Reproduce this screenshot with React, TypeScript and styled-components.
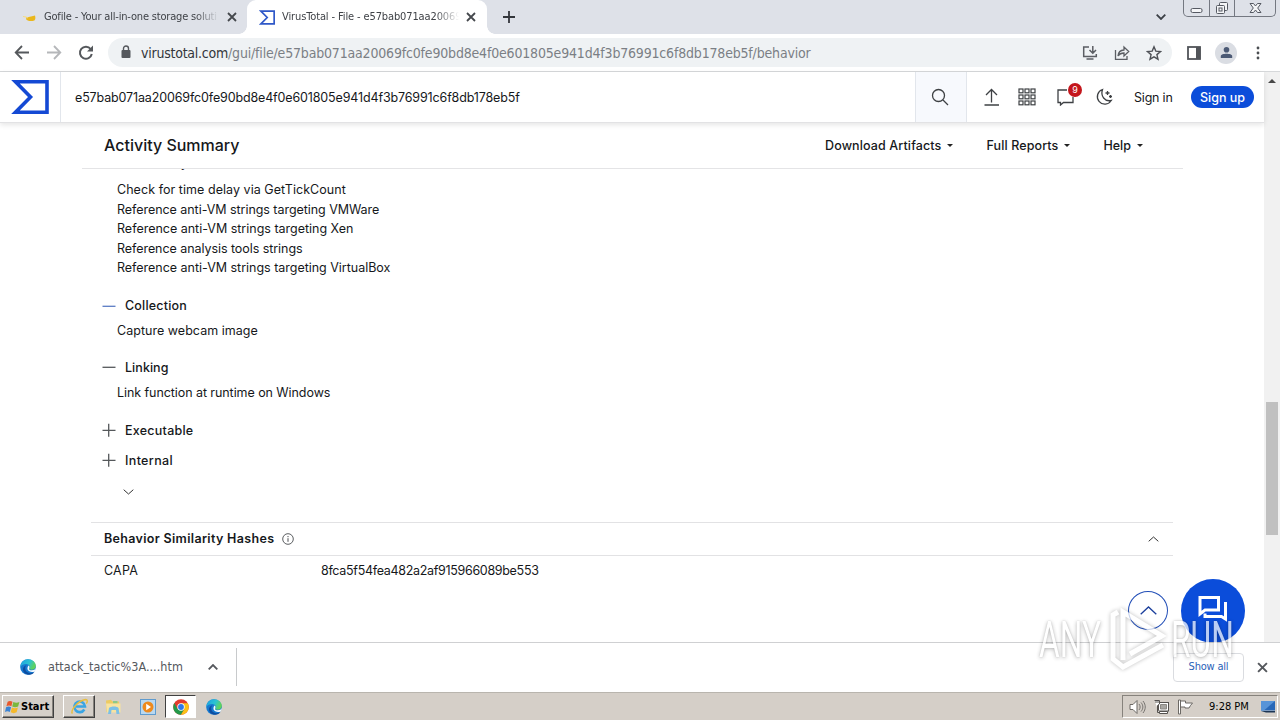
import React from "react";
import styled, { createGlobalStyle, css } from "styled-components";

const uiFont = `"DejaVu Sans Condensed", "DejaVu Sans", "Liberation Sans", sans-serif`;
const pageFont = `Inter, "Liberation Sans", sans-serif`;

const Global = createGlobalStyle`
  * { box-sizing: border-box; }
  html, body { margin: 0; padding: 0; background: #fff; overflow: hidden; }
  svg { display: block; flex: none; }
`;

const Desktop = styled.div`
  position: relative;
  width: 1280px;
  height: 720px;
  display: flex;
  flex-direction: column;
  overflow: hidden;
  font-family: ${uiFont};
  background: #fff;
`;

const Label = styled.span<{ $size?: number; $ls?: number; $color?: string; $weight?: number; $page?: boolean }>`
  white-space: nowrap;
  font-family: ${(p) => (p.$page ? pageFont : uiFont)};
  font-size: ${(p) => p.$size ?? 12}px;
  letter-spacing: ${(p) => p.$ls ?? 0}px;
  color: ${(p) => p.$color ?? "#16181b"};
  font-weight: ${(p) => p.$weight ?? 400};
`;

/* ---------- browser chrome ---------- */

const TabStrip = styled.div`
  display: flex;
  height: 34px;
  background: #dee1e8;
`;

const Tab = styled.div<{ $active?: boolean; $width: number; $pad: number; $gap: number }>`
  display: flex;
  align-items: center;
  width: ${(p) => p.$width}px;
  height: 34px;
  padding-left: ${(p) => p.$pad}px;
  gap: ${(p) => p.$gap}px;
  ${(p) =>
    p.$active &&
    css`
      background: #fff;
      border-radius: 9px 9px 0 0;
    `}
`;

const TabTitle = styled(Label)<{ $w: number }>`
  width: ${(p) => p.$w}px;
  line-height: 16px;
  mask-image: linear-gradient(90deg, #000 calc(100% - 24px), transparent);
`;

const TabFoot = styled.div<{ $left?: boolean }>`
  width: 8px;
  height: 8px;
  margin-top: 26px;
  margin-left: ${(p) => (p.$left ? -8 : 0)}px;
  background: radial-gradient(circle at ${(p) => (p.$left ? "0 0" : "100% 0")}, #dee1e8 7.5px, #fff 8px);
`;

const NewTab = styled.div`
  padding: 11px 0 0 8px;
`;

const TabSearch = styled.div`
  margin-left: auto;
  padding: 14px 17px 0 0;
`;

const WindowButtons = styled.div`
  display: flex;
  width: 93px;
  height: 17px;
  margin-right: 4px;
  border: 1px solid #747881;
  border-top: 0;
  border-radius: 0 0 5px 5px;
`;

const WindowButton = styled.div<{ $w: number }>`
  width: ${(p) => p.$w}px;
  display: flex;
  justify-content: center;
  & + & {
    border-left: 1px solid #747881;
  }
`;

const Toolbar = styled.div`
  display: flex;
  align-items: center;
  height: 38px;
  border-bottom: 1px solid #d6d8da;
`;

const NavButtons = styled.div`
  display: flex;
  gap: 16px;
  padding: 0 14px;
`;

const Omnibox = styled.div`
  display: flex;
  align-items: center;
  width: 1064px;
  height: 29px;
  padding: 0 10px 0 12px;
  border-radius: 15px;
  background: #eff2f4;
`;

const Url = styled.div`
  display: flex;
  margin-left: 9px;
`;

const OmniboxActions = styled.div`
  display: flex;
  gap: 16px;
  margin-left: auto;
`;

const ToolbarActions = styled.div`
  display: flex;
  align-items: center;
  padding-left: 14px;
  gap: 13px;
`;

const Avatar = styled.div`
  display: flex;
  align-items: center;
  justify-content: center;
  width: 22px;
  height: 22px;
  border-radius: 50%;
  background: #dadde3;
`;

/* ---------- page ---------- */

const Viewport = styled.div`
  display: flex;
  height: 570px;
`;

const Page = styled.div`
  position: relative;
  width: 1264px;
  display: flex;
  flex-direction: column;
`;

const SiteHeader = styled.header`
  position: relative;
  z-index: 2;
  display: flex;
  height: 51px;
  background: #fff;
  border-bottom: 1px solid #e2e2e4;
  box-shadow: 0 2px 5px rgba(0, 0, 0, 0.1);
`;

const LogoBox = styled.div`
  width: 61px;
  padding: 8px 0 0 11px;
  border-right: 1px solid #e2e6ec;
`;

const SearchText = styled.div`
  display: flex;
  align-items: center;
  flex: 1;
  padding-left: 14px;
`;

const SearchButton = styled.div`
  display: flex;
  align-items: center;
  justify-content: center;
  width: 52px;
  padding-right: 2px;
  background: #f7f9fd;
  border: 1px solid #e2e6ec;
  border-width: 0 1px;
`;

const HeaderActions = styled.div`
  display: flex;
  align-items: center;
  width: 297px;
  padding-left: 16px;
`;

const IconSlot = styled.div<{ $w: number }>`
  position: relative;
  width: ${(p) => p.$w}px;
`;

const Badge = styled.div`
  position: absolute;
  left: 12px;
  top: -5px;
  width: 14px;
  height: 14px;
  border-radius: 50%;
  background: #c4161c;
  color: #fff;
  font: 9px/14px ${pageFont};
  text-align: center;
`;

const SignUp = styled.div`
  display: flex;
  align-items: center;
  justify-content: center;
  width: 63px;
  height: 22px;
  margin-left: auto;
  margin-right: 10px;
  border-radius: 11px;
  background: #0b4dda;
`;

const SummaryBar = styled.div`
  position: relative;
  z-index: 1;
  display: flex;
  align-items: center;
  flex: none;
  width: 1101px;
  height: 46px;
  margin-left: 82px;
  padding: 0 40px 1px 22px;
  background: #fff;
  border-bottom: 1px solid #e4e4e6;
`;

const Menus = styled.div`
  display: flex;
  gap: 33px;
  margin-left: auto;
`;

const Menu = styled.div`
  display: flex;
  align-items: center;
  gap: 6px;
`;

const Caret = styled.i`
  border: 3px solid transparent;
  border-top: 3px solid #222;
  border-bottom: 0;
`;

const Behaviors = styled.div`
  display: flex;
  flex-direction: column;
  flex: none;
  height: 370px;
  margin-left: 102px;
  margin-top: -17px;
`;

const Rule = styled.div`
  height: 19.5px;
  line-height: 19.5px;
  padding-left: 15px;
  display: flex;
`;

const GroupHead = styled.div<{ $top: number }>`
  display: flex;
  align-items: center;
  gap: 9px;
  height: 20px;
  margin-top: ${(p) => p.$top}px;
`;

const GroupRules = styled.div<{ $top?: number }>`
  padding-top: ${(p) => p.$top ?? 5}px;
`;

const More = styled.div`
  padding: 19px 0 0 21px;
`;

const HashSection = styled.section`
  width: 1082px;
  margin-left: 91px;
  border-top: 1px solid #e2e2e4;
`;

const HashHead = styled.div`
  display: flex;
  align-items: center;
  gap: 8px;
  height: 33px;
  padding: 0 14px 1px 13px;
  border-bottom: 1px solid #e2e2e4;
  & > :last-child {
    margin-left: auto;
  }
`;

const HashRow = styled.div`
  display: grid;
  grid-template-columns: 217px auto;
  align-items: center;
  height: 28px;
  padding-left: 13px;
`;

const BackToTop = styled.div`
  position: absolute;
  left: 1128px;
  top: 519px;
  width: 40px;
  height: 39px;
  display: flex;
  align-items: center;
  justify-content: center;
  border: 1px solid #2450b8;
  border-radius: 50%;
  background: #fff;
`;

const ChatButton = styled.div`
  position: absolute;
  left: 1181px;
  top: 507px;
  width: 64px;
  height: 64px;
  display: flex;
  justify-content: center;
  padding-top: 15px;
  border-radius: 50%;
  background: #0b4dda;
`;

const Scrollbar = styled.div`
  width: 16px;
  background: #f1f1f1;
  padding: 7px 2px 0;
`;

const ScrollUp = styled.div`
  margin: 0 auto;
  width: 0;
  border: 4px solid transparent;
  border-top: 0;
  border-bottom: 4px solid #484848;
`;

const Thumb = styled.div`
  width: 12px;
  height: 133px;
  margin-top: 319px;
  background: #c0c0c0;
`;

/* ---------- downloads and taskbar ---------- */

const Downloads = styled.div`
  position: relative;
  display: flex;
  align-items: center;
  height: 50px;
  padding-bottom: 1px;
  background: #fff;
  border-top: 1px solid #cfd0d2;
`;

const DownloadItem = styled.div`
  display: flex;
  align-items: center;
  justify-content: space-between;
  width: 237px;
  height: 38px;
  padding: 0 18px 0 20px;
  border-right: 1px solid #c8cacc;
`;

const DownloadFile = styled.div`
  display: flex;
  align-items: center;
  gap: 12px;
  ${Label} {
    padding-bottom: 2px;
  }
`;

const DownloadActions = styled.div`
  display: flex;
  align-items: center;
  gap: 13px;
  margin-left: auto;
  padding-right: 12px;
`;

const ShowAll = styled.div`
  display: flex;
  align-items: center;
  justify-content: center;
  width: 71px;
  height: 29px;
  padding-bottom: 2px;
  border: 1px solid #dadce0;
  border-radius: 4px;
`;

const Taskbar = styled.div`
  display: flex;
  align-items: center;
  height: 28px;
  border-top: 1px solid #b9b5ae;
  background: #d5cfc8;
`;

const StartButton = styled.div`
  display: flex;
  align-items: center;
  width: 52px;
  height: 23px;
  margin-left: 2px;
  padding-left: 2px;
  border: 1px solid #fff;
  border-right-color: #404040;
  border-bottom-color: #404040;
  box-shadow: inset -1px -1px #86827c;
`;

const TaskButton = styled.div<{ $state?: "open" | "active"; $w: number }>`
  display: flex;
  align-items: center;
  justify-content: center;
  width: ${(p) => p.$w}px;
  height: 23px;
  border: 1px solid transparent;
  ${(p) =>
    p.$state === "open" &&
    css`
      border-color: #fff #404040 #404040 #fff;
      box-shadow: inset -1px -1px #86827c;
    `}
  ${(p) =>
    p.$state === "active" &&
    css`
      border-color: #404040 #fff #fff #404040;
      background: #fff;
    `}
`;

const TaskButtons = styled.div`
  display: flex;
  margin-left: 9px;
`;

const Tray = styled.div`
  display: flex;
  align-items: center;
  width: 156px;
  height: 23px;
  margin-left: auto;
  margin-right: 2px;
  padding: 0 1px 0 6px;
  border: 1px solid;
  border-color: #86827c #fff #fff #86827c;
  & > :last-child {
    margin-left: auto;
  }
`;

const TrayIcons = styled.div`
  display: flex;
  gap: 7px;
  width: 80px;
`;

const Watermark = styled.div`
  position: absolute;
  left: 1039px;
  top: 604px;
  width: 200px;
  height: 72px;
  display: grid;
  grid-template-columns: 67px 65px 64px;
  align-items: center;
  opacity: 0.72;
`;

const MarkWord = styled.div`
  font: 400 50px/60px Roboto, sans-serif;
  white-space: nowrap;
  color: #fff;
  text-shadow: 0 0 2px rgba(0, 0, 0, 0.25), 0 1px 6px rgba(0, 0, 0, 0.4);
  transform: scaleX(0.635);
  transform-origin: 0 50%;
`;

const MarkPlay = styled.svg`
  filter: drop-shadow(0 0 2px rgba(0, 0, 0, 0.35));
`;

/* ---------- icons ---------- */

const Cross = ({ s, c = "#45484d", w = 1.8 }: { s: number; c?: string; w?: number }) => (
  <svg width={s} height={s} viewBox="0 0 10 10" stroke={c} strokeWidth={w} fill="none">
    <path d="M1 1l8 8M9 1l-8 8" />
  </svg>
);

const Sigma = ({ w, h, c, sw }: { w: number; h: number; c: string; sw: number }) => (
  <svg width={w} height={h} viewBox="0 0 38 34" fill="none" stroke={c} strokeWidth={sw}>
    <path d="M4.5 1.8H36V32.2H4.5L19.5 17Z" />
  </svg>
);

const Chevron = ({ w, h, up, c = "#333", sw = 1 }: { w: number; h: number; up?: boolean; c?: string; sw?: number }) => (
  <svg width={w} height={h} viewBox={`0 0 ${w} ${h}`} fill="none" stroke={c} strokeWidth={sw}>
    {up ? <path d={`M.7 ${h - 0.7}L${w / 2} 1l${w / 2 - 0.7} ${h - 1.7}`} /> : <path d={`M.7 .7L${w / 2} ${h - 1}L${w - 0.7} .7`} />}
  </svg>
);

const Toggle = ({ open, c = "#55585b" }: { open?: boolean; c?: string }) => (
  <svg width="14" height="14" viewBox="0 0 14 14" stroke={c} strokeWidth="1.3">
    <path d={open ? "M.5 7.300h13" : "M.5 7.300h13M6.700 .8v13"} />
  </svg>
);

const EdgeIcon = ({ s }: { s: number }) => (
  <svg width={s} height={s} viewBox="0 0 16 16">
    <defs>
      <linearGradient id="edgeTop" x1="0" y1="0" x2="1" y2="0.4">
        <stop offset="0" stopColor="#1b9de2" />
        <stop offset="0.6" stopColor="#2bc3d2" />
        <stop offset="1" stopColor="#5fd35b" />
      </linearGradient>
    </defs>
    <circle cx="8" cy="8" r="7.8" fill="#1679d0" />
    <path d="M.3 8C.6 3.500 3.800.2 8 .2c4.500 0 7.800 3.200 7.800 6.500 0 2.500-1.900 4-4.100 4-1.900 0-2.800-.7-2.500-1.400.9-1 .9-3.600-2-4.100C4.500 4.800 1.500 6 .3 8z" fill="url(#edgeTop)" />
    <path d="M5.300 8.300C4.700 11 6.500 14 10 14.200c2 .1 3.600-.7 4.600-1.700C12.500 17 5 17 3 11.500c-.4-2 .5-4.400 3.400-5.300-.6.6-1 1.300-1.100 2.100z" fill="#0d4da0" />
    <path d="M8.700 6.500c1 1 1 2.200.4 3-.4.9.8 1.900 2.900 1.800 1.800-.1 3-.8 3.800-2-.2 1.400-.6 2.400-1.200 3.200-2.500 1.200-6.300.3-7-2-.4-1.500 0-3 1.100-4z" fill="#f4fbff" />
  </svg>
);

const IeIcon = () => (
  <svg width="19" height="19" viewBox="0 0 19 19" fill="none">
    <path d="M14.300 12.500a5.300 5.300 0 1 1 .7-3H6" stroke="#3aa5e4" strokeWidth="2.600" />
    <path d="M2.500 16.500C-.5 14 8 3.500 15.500 2.500c2.500 0 2 2.500.8 4.200" stroke="#e9bd3c" strokeWidth="1.400" />
  </svg>
);

const FolderIcon = () => (
  <svg width="17" height="17" viewBox="0 0 17 17">
    <path d="M1 2.500l5-.7 1.500 1.700H14l1 10.500H1.500z" fill="#edcb62" />
    <path d="M8 3h4.500v2.500H8z" fill="#8cc98a" />
    <path d="M1 5.500h14.500V14.500H2z" fill="#f8e3a0" />
    <path d="M3 16l1-6c2-2 8-2 9.500 0l1 6h-3l-.5-4H6.500L6 16z" fill="#7cc0e6" />
  </svg>
);

const PlayerIcon = () => (
  <svg width="16" height="16" viewBox="0 0 16 16">
    <rect x=".5" y=".5" width="15" height="15" fill="#b9d8f0" stroke="#5f9bce" />
    <circle cx="8" cy="8" r="5.500" fill="#ee8a1d" />
    <path d="M6.200 4.800v6.400L11 8z" fill="#fff" />
  </svg>
);

const ChromeIcon = () => (
  <svg width="16" height="16" viewBox="0 0 16 16">
    <circle cx="8" cy="8" r="7.800" fill="#e33b2e" />
    <path d="M1.300 4.100A7.800 7.800 0 0 0 8 15.800l3.400-5.900H4.600z" fill="#23994a" />
    <path d="M8 15.800A7.800 7.800 0 0 0 14.800 4.200H8l3.400 5.700z" fill="#fbc116" />
    <circle cx="8" cy="8" r="3.700" fill="#fff" />
    <circle cx="8" cy="8" r="2.900" fill="#2f78e8" />
  </svg>
);

const WindowsFlag = () => (
  <svg width="16" height="16" viewBox="0 0 15 15">
    <path d="M2.500 2.500C4 1.500 5.500 1.600 7 2.500L6 6.800C4.500 6 3 6 1.300 6.800z" fill="#e8582c" />
    <path d="M7.800 2.800c2 1 3.700 1 5.700 0l-1.200 4.300c-2 1-3.700 1-5.500 0z" fill="#7ab83c" />
    <path d="M1 7.700c1.700-.8 3.200-.8 4.700 0l-1.200 4.500C3 11.300 1.500 11.300 0 12.200z" fill="#3a83d4" />
    <path d="M6.500 8c1.900 1 3.700 1 5.600 0l-1.200 4.500c-1.900 1-3.700 1-5.600 0z" fill="#f5b92b" />
  </svg>
);

const menuItems = [
  { text: "Download Artifacts", ls: 0.12 },
  { text: "Full Reports", ls: 0.12 },
  { text: "Help", ls: 0 },
];

const antiAnalysis = [
  { text: "Check for time delay via GetTickCount", ls: 0.05 },
  { text: "Reference anti-VM strings targeting VMWare", ls: -0.05 },
  { text: "Reference anti-VM strings targeting Xen", ls: -0.01 },
  { text: "Reference analysis tools strings", ls: -0.06 },
  { text: "Reference anti-VM strings targeting VirtualBox", ls: -0.02 },
];

const RuleText = ({ text, ls }: { text: string; ls: number }) => (
  <Rule>
    <Label $page $size={12.5} $ls={ls}>{text}</Label>
  </Rule>
);

const Group = ({ title, ls = 0, top, open, c }: { title: string; ls?: number; top: number; open?: boolean; c?: string }) => (
  <GroupHead $top={top}>
    <Toggle open={open} c={c} />
    <Label $page $size={12.5} $weight={550} $ls={ls}>{title}</Label>
  </GroupHead>
);

export default function App() {
  return (
    <Desktop>
      <Global />
      <TabStrip>
        <Tab $width={247} $pad={22} $gap={8}>
          <svg width="14" height="12" viewBox="0 0 14 12">
            <path d="M4 6c2 1 2.500-.5 5-.5l4-1c.6 2 .6 4-.6 5-3 1-6 .8-8-.8z" fill="#eab71c" />
            <path d="M1 5.500l3 .5 2 1" stroke="#f7dc80" fill="none" />
          </svg>
          <TabTitle $w={175} $size={11} $ls={-0.18} $color="#3f4247">Gofile - Your all-in-one storage soluti</TabTitle>
          <Cross s={10} />
        </Tab>
        <TabFoot $left />
        <Tab $active $width={240} $pad={12} $gap={7}>
          <Sigma w={16} h={15} c="#2f58c8" sw={4} />
          <TabTitle $w={177} $size={11} $ls={-0.12} $color="#3f4247">VirusTotal - File - e57bab071aa20069</TabTitle>
          <Cross s={10} />
        </Tab>
        <TabFoot />
        <NewTab>
          <svg width="12" height="12" viewBox="0 0 12 12" stroke="#33363b" strokeWidth="1.800"><path d="M0 6h12M6 0v12" /></svg>
        </NewTab>
        <TabSearch><Chevron w={10} h={6} c="#3c4046" sw={1.8} /></TabSearch>
        <WindowButtons>
          <WindowButton $w={25}>
            <svg width="13" height="16" viewBox="0 0 13 16"><rect x="1" y="8.500" width="11" height="4" rx="1.500" fill="#f4f5f7" stroke="#555962" /></svg>
          </WindowButton>
          <WindowButton $w={25}>
            <svg width="14" height="16" viewBox="0 0 14 16" fill="#f4f5f7" stroke="#555962"><rect x="4.500" y="2.500" width="8" height="8" rx="1" /><rect x="1.500" y="5.500" width="8" height="8" rx="1" /><rect x="4" y="8" width="3" height="3" /></svg>
          </WindowButton>
          <WindowButton $w={41}>
            <svg width="13" height="16" viewBox="0 0 13 16"><path d="M1 3.500h3.500l2 2.500 2-2.500H12L8.700 8l3.300 4.500H8.500l-2-2.500-2 2.500H1L4.300 8z" fill="#f4f5f7" stroke="#555962" /></svg>
          </WindowButton>
        </WindowButtons>
      </TabStrip>

      <Toolbar>
        <NavButtons>
          <svg width="16" height="16" viewBox="0 0 16 16" fill="none" stroke="#55585c" strokeWidth="1.800"><path d="M15 7.500H2M8 1L1.700 7.500 8 14" /></svg>
          <svg width="16" height="16" viewBox="0 0 16 16" fill="none" stroke="#b5b7ba" strokeWidth="1.800"><path d="M1 7.500h13M8 1L14.300 7.500 8 14" /></svg>
          <svg width="16" height="16" viewBox="0 0 16 16" fill="none" stroke="#55585c" strokeWidth="2"><path d="M13.800 9A6 6 0 1 1 12.700 4" /><path d="M9 6.500h6v-6z" fill="#55585c" stroke="none" /></svg>
        </NavButtons>
        <Omnibox>
          <svg width="12" height="15" viewBox="0 0 12 15"><rect x="1.500" y="5" width="9" height="8" rx="1" fill="#55585d" /><path d="M3.500 5.500V3.500a2.500 2.500 0 0 1 5 0v2" fill="none" stroke="#55585d" strokeWidth="1.400" /></svg>
          <Url>
            <Label $size={14} $ls={-0.24} $color="#33363b">virustotal.com</Label>
            <Label $size={14} $ls={-0.18} $color="#7b7f85">/gui/file/e57bab071aa20069fc0fe90bd8e4f0e601805e941d4f3b76991c6f8db178eb5f/behavior</Label>
          </Url>
          <OmniboxActions>
            <svg width="16" height="16" viewBox="0 0 16 16" fill="none" stroke="#5b5e63" strokeWidth="1.500"><path d="M7 2H1.700v9.500h12.600V9M10.800 1v7M7.500 5l3.300 3.300L14 5M4.500 14h7" /></svg>
            <svg width="16" height="16" viewBox="0 0 16 16" fill="none" stroke="#5b5e63" strokeWidth="1.300"><path d="M1.500 5v9.300h11.500V11M4 11c.3-4 2.500-5.800 6-6V2l4.700 4.500L10 11V8c-3 0-4.700 1-6 3z" /></svg>
            <svg width="16" height="16" viewBox="0 0 16 16" fill="none" stroke="#4f5257" strokeWidth="1.400"><path d="M8 1.800l1.800 4.300 4.700.4-3.600 3.100 1.100 4.600L8 11.800l-4 2.400 1.100-4.600L1.500 6.500l4.700-.4z" /></svg>
          </OmniboxActions>
        </Omnibox>
        <ToolbarActions>
          <svg width="16" height="14" viewBox="0 0 16 14"><rect x="2" y="1" width="12" height="12" fill="#fff" stroke="#515459" strokeWidth="1.800" /><path d="M10 1h4.500v12H10z" fill="#515459" /></svg>
          <Avatar>
            <svg width="13" height="13" viewBox="0 0 13 13" fill="#4c5a75"><circle cx="6.500" cy="3.700" r="2.800" /><path d="M.8 12V10C.8 7 12.200 7 12.200 10v2z" /></svg>
          </Avatar>
          <svg width="16" height="14" viewBox="0 0 16 14" fill="#4a4d51"><circle cx="8" cy="2" r="1.400" /><circle cx="8" cy="7" r="1.400" /><circle cx="8" cy="12" r="1.400" /></svg>
        </ToolbarActions>
      </Toolbar>

      <Viewport>
        <Page>
          <SiteHeader>
            <LogoBox><Sigma w={38} h={34} c="#1449d4" sw={3.6} /></LogoBox>
            <SearchText>
              <Label $page $size={12.5} $ls={-0.14}>e57bab071aa20069fc0fe90bd8e4f0e601805e941d4f3b76991c6f8db178eb5f</Label>
            </SearchText>
            <SearchButton>
              <svg width="18" height="18" viewBox="0 0 18 18" fill="none" stroke="#3e4144" strokeWidth="1.300"><circle cx="7.500" cy="7.500" r="6" /><path d="M12 12l5 5" /></svg>
            </SearchButton>
            <HeaderActions>
              <IconSlot $w={34.5}>
                <svg width="17" height="18" viewBox="0 0 17 18" fill="none" stroke="#3e4144" strokeWidth="1.300"><path d="M1.500 17h14.500M8.500 14.500V1.500M3 7l5.500-5.500L14 7" /></svg>
              </IconSlot>
              <IconSlot $w={38.5}>
                <svg width="18" height="18" viewBox="0 0 18 18" fill="none" stroke="#3e4144" strokeWidth="1.200">
                  {[1, 7, 13].map((y) => [1, 7, 13].map((x) => <rect key={`${x}-${y}`} x={x} y={y} width="4" height="3.800" />))}
                </svg>
              </IconSlot>
              <IconSlot $w={39}>
                <svg width="19" height="18" viewBox="0 0 19 18" fill="none" stroke="#3e4144" strokeWidth="1.300"><path d="M11 2H2v12.500h2.500V17L7.500 14.500H17V9" /></svg>
                <Badge>9</Badge>
              </IconSlot>
              <IconSlot $w={39}>
                <svg width="18" height="18" viewBox="0 0 18 18" fill="none" stroke="#3e4144" strokeWidth="1.300"><path d="M7.500 1.500A7.500 7.500 0 1 0 16.300 12.500C9.800 14 5.300 8 7.500 1.500zM12.500 3v4M10.500 5h4M15.500 7v3M14 8.500h3" /></svg>
              </IconSlot>
              <Label $page $size={12.5} $ls={-0.2}>Sign in</Label>
              <SignUp><Label $page $size={12.5} $color="#fff" $weight={500}>Sign up</Label></SignUp>
            </HeaderActions>
          </SiteHeader>

          <SummaryBar>
            <Label $page $size={16} $weight={500}>Activity Summary</Label>
            <Menus>
              {menuItems.map((m) => (
                <Menu key={m.text}><Label $page $size={12.5} $ls={m.ls} $weight={450}>{m.text}</Label><Caret /></Menu>
              ))}
            </Menus>
          </SummaryBar>

          <Behaviors>
            <Group title="Anti-Analysis" top={0} open />
            <GroupRules $top={8}>
              {antiAnalysis.map((r) => <RuleText key={r.text} {...r} />)}
            </GroupRules>
            <Group title="Collection" ls={0.2} top={18} open c="#5b7cc4" />
            <GroupRules><RuleText text="Capture webcam image" ls={0.03} /></GroupRules>
            <Group title="Linking" ls={0.05} top={17.4} open />
            <GroupRules $top={5.6}><RuleText text="Link function at runtime on Windows" ls={-0.07} /></GroupRules>
            <Group title="Executable" ls={0.25} top={18} />
            <Group title="Internal" ls={0.35} top={10} />
            <More><Chevron w={11} h={6} /></More>
          </Behaviors>

          <HashSection>
            <HashHead>
              <Label $page $size={12.5} $weight={600} $ls={0.33}>Behavior Similarity Hashes</Label>
              <svg width="12" height="12" viewBox="0 0 12 12" fill="none" stroke="#4a4d50"><circle cx="6" cy="6" r="5.300" strokeWidth=".9" /><path d="M6 5.200v3.600M6 3v1.200" /></svg>
              <Chevron w={11} h={6} up />
            </HashHead>
            <HashRow>
              <Label $page $size={12.5} $ls={0.2}>CAPA</Label>
              <Label $page $size={12.5} $ls={-0.31}>8fca5f54fea482a2af915966089be553</Label>
            </HashRow>
          </HashSection>

          <BackToTop><Chevron w={17} h={9} up c="#1b3f9c" sw={1.3} /></BackToTop>
          <ChatButton>
            <svg width="32" height="30" viewBox="0 0 32 30" fill="none" stroke="#fff" strokeWidth="3"><path d="M3 3.500h18.500v12.500H8l-5 4z" /><path d="M28.500 8v17l-4-2.500H8v-3" /></svg>
          </ChatButton>
        </Page>
        <Scrollbar><ScrollUp /><Thumb /></Scrollbar>
      </Viewport>

      <Downloads>
        <DownloadItem>
          <DownloadFile>
            <EdgeIcon s={16} />
            <Label $size={12.5} $ls={0.03} $color="#55585d">attack_tactic%3A....htm</Label>
          </DownloadFile>
          <Chevron w={10} h={6} up c="#55585d" sw={1.8} />
        </DownloadItem>
        <DownloadActions>
          <ShowAll><Label $size={11} $ls={-0.2} $color="#2a62b8">Show all</Label></ShowAll>
          <Cross s={11} c="#55585d" />
        </DownloadActions>
      </Downloads>

      <Taskbar>
        <StartButton><WindowsFlag /><Label $size={11} $weight={700} $color="#000">Start</Label></StartButton>
        <TaskButtons>
          <TaskButton $w={32} $state="open"><IeIcon /></TaskButton>
          <TaskButton $w={36}><FolderIcon /></TaskButton>
          <TaskButton $w={34}><PlayerIcon /></TaskButton>
          <TaskButton $w={31} $state="active"><ChromeIcon /></TaskButton>
          <TaskButton $w={36}><EdgeIcon s={16} /></TaskButton>
        </TaskButtons>
        <Tray>
          <TrayIcons>
            <svg width="17" height="16" viewBox="0 0 17 16" fill="#fff" stroke="#6c6965"><path d="M1 5.500h3L8 1.500v13L4 10.500H1z" /><path d="M10 5c1.500 2 1.500 4 0 6M12 3.500c2.500 3 2.500 6 0 9M14 2c3 4 3 8 0 12" fill="none" strokeWidth=".9" /></svg>
            <svg width="17" height="16" viewBox="0 0 17 16" stroke="#55524f"><rect x="5.500" y="3.500" width="10" height="8.500" fill="#fff" /><path d="M7.500 5.500h6v4.500h-6z" fill="#a8a6a2" stroke="#8a8884" /><path d="M6.500 14.500h8v-2h-8z" fill="#fff" /><path d="M1.500 1.500h5V5L4.500 6.500v7H6M3 1.500V4M5 1.500V4" fill="#fff" /></svg>
            <svg width="17" height="16" viewBox="0 0 17 16" fill="#fff" stroke="#6c6965"><path d="M1.500 1h2v14h-2zM3.500 2h5v2h7L13.500 6.500 12 9H8V8H3.500z" /></svg>
          </TrayIcons>
          <Label $size={11} $color="#000">9:28 PM</Label>
          <svg width="16" height="14" viewBox="0 0 16 14"><path d="M1 1h14v9.500H1z" fill="#2868b8" /><path d="M1 1h14L4 10.500H1z" fill="#5794d8" /><path d="M1 11h14v1.500H6z" fill="#1c3554" /></svg>
        </Tray>
      </Taskbar>

      <Watermark>
        <MarkWord>ANY</MarkWord>
        <MarkPlay width="65" height="72" viewBox="0 0 65 72" fill="none" stroke="#fff" strokeWidth="5">
          <path d="M12 8L7 11V55l10 8 40-22" />
          <path d="M17 56V8L56 32 24 50" />
        </MarkPlay>
        <MarkWord>RUN</MarkWord>
      </Watermark>
    </Desktop>
  );
}
